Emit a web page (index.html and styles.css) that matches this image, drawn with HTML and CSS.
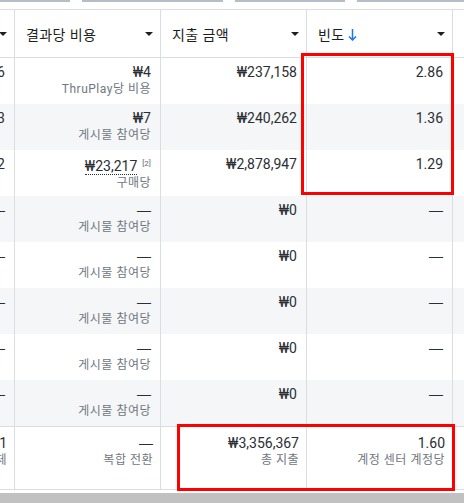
FILE: index.html
```html
<!DOCTYPE html>
<html lang="ko">
<head>
    <meta charset="UTF-8">
    <meta name="viewport" content="width=device-width, initial-scale=1.0">
    <title>광고 보고서</title>
    <link rel="stylesheet" href="styles.css">
</head>
<body>
    <div class="page">
        <div class="tabs">
            <span class="tab tab-a"></span>
            <span class="tab tab-b"></span>
            <span class="tab tab-c"></span>
            <span class="tab tab-d"></span>
        </div>

        <div class="report">
            <div class="row head">
                <div class="cell"><span class="caret"></span></div>
                <div class="cell"><span class="title">결과당 비용</span><span class="caret"></span></div>
                <div class="cell"><span class="title">지출 금액</span><span class="caret"></span></div>
                <div class="cell">
                    <span class="title">빈도
                        <svg class="sort" width="9" height="13" viewBox="0 0 9 13"><path d="M4.5 1v11M1 8.5l3.5 3.5 3.5-3.5" fill="none" stroke="#1877f2" stroke-width="1.5"/></svg>
                    </span>
                    <span class="caret"></span>
                </div>
                <div class="cell"></div>
            </div>

            <div class="row">
                <div class="cell"><span class="value">56</span></div>
                <div class="cell"><span class="value">₩4</span><span class="sub">ThruPlay당 비용</span></div>
                <div class="cell"><span class="value">₩237,158</span></div>
                <div class="cell"><span class="value">2.86</span></div>
                <div class="cell"></div>
            </div>
            <div class="row">
                <div class="cell"><span class="value">33</span></div>
                <div class="cell"><span class="value">₩7</span><span class="sub">게시물 참여당</span></div>
                <div class="cell"><span class="value">₩240,262</span></div>
                <div class="cell"><span class="value">1.36</span></div>
                <div class="cell"></div>
            </div>
            <div class="row">
                <div class="cell"><span class="value">12</span></div>
                <div class="cell"><span class="value"><span class="dotted">₩23,217</span><sup class="note">[2]</sup></span><span class="sub">구매당</span></div>
                <div class="cell"><span class="value">₩2,878,947</span></div>
                <div class="cell"><span class="value">1.29</span></div>
                <div class="cell"></div>
            </div>
            <div class="row">
                <div class="cell"><span class="value dash">—</span></div>
                <div class="cell"><span class="value dash">—</span><span class="sub">게시물 참여당</span></div>
                <div class="cell"><span class="value">₩0</span></div>
                <div class="cell"><span class="value dash">—</span></div>
                <div class="cell"></div>
            </div>
            <div class="row">
                <div class="cell"><span class="value dash">—</span></div>
                <div class="cell"><span class="value dash">—</span><span class="sub">게시물 참여당</span></div>
                <div class="cell"><span class="value">₩0</span></div>
                <div class="cell"><span class="value dash">—</span></div>
                <div class="cell"></div>
            </div>
            <div class="row">
                <div class="cell"><span class="value dash">—</span></div>
                <div class="cell"><span class="value dash">—</span><span class="sub">게시물 참여당</span></div>
                <div class="cell"><span class="value">₩0</span></div>
                <div class="cell"><span class="value dash">—</span></div>
                <div class="cell"></div>
            </div>
            <div class="row">
                <div class="cell"><span class="value dash">—</span></div>
                <div class="cell"><span class="value dash">—</span><span class="sub">게시물 참여당</span></div>
                <div class="cell"><span class="value">₩0</span></div>
                <div class="cell"><span class="value dash">—</span></div>
                <div class="cell"></div>
            </div>
            <div class="row">
                <div class="cell"><span class="value dash">—</span></div>
                <div class="cell"><span class="value dash">—</span><span class="sub">게시물 참여당</span></div>
                <div class="cell"><span class="value">₩0</span></div>
                <div class="cell"><span class="value dash">—</span></div>
                <div class="cell"></div>
            </div>

            <div class="row total">
                <div class="cell"><span class="value">1</span><span class="sub">전체</span></div>
                <div class="cell"><span class="value dash">—</span><span class="sub">복합 전환</span></div>
                <div class="cell"><span class="value">₩3,356,367</span><span class="sub">총 지출</span></div>
                <div class="cell"><span class="value">1.60</span><span class="sub">계정 센터 계정당</span></div>
                <div class="cell"></div>
            </div>
        </div>

        <div class="scrollbar"></div>

        <!-- highlight boxes drawn over the table -->
        <div class="mark mark-freq"></div>
        <div class="mark mark-total"></div>
    </div>
</body>
</html>
```

FILE: styles.css
```css
* {
    margin: 0;
    padding: 0;
    box-sizing: border-box;
}

body {
    background: #fff;
    color: #1c1e21;
    font-family: Roboto, "Noto Sans CJK KR", sans-serif;
    overflow: hidden;
}

.page {
    position: relative;
    width: 464px;
    height: 503px;
}

.tabs {
    display: flex;
    gap: 12px;
    height: 9px;
}

.tab {
    height: 2px;
    background: #b3bec9;
}

.tab-a { width: 70px; }
.tab-b { width: 141px; }
.tab-c { width: 110px; }
.tab-d { flex: 1; }

.report {
    border-top: 1px solid #dadde1;
}

.row {
    display: grid;
    grid-template-columns: 15px 146px 146px 146px 1fr;
    height: 46px;
}

.row:nth-child(odd) {
    background: #f5f6f7;
}

.cell {
    display: flex;
    flex-direction: column;
    align-items: flex-end;
    padding: 6px 9px 0 0;
    border-right: 1px solid #dadde1;
    overflow: hidden;
    white-space: nowrap;
}

.cell:last-child {
    border-right: none;
}

.value {
    font-size: 14px;
    line-height: 16px;
    color: #2b2e33;
}

.dash {
    font-family: "Liberation Sans", sans-serif;
}

.sub {
    font-size: 12px;
    line-height: 18px;
    letter-spacing: 0.5px;
    color: #707780;
}

.dotted {
    border-bottom: 1px dotted #2b2e33;
}

.note {
    font-size: 8px;
    color: #606770;
    vertical-align: 5px;
    margin-left: 5px;
}

/* header row */
.row.head {
    height: 48px;
    background: #fff;
    border-bottom: 1px solid #dadde1;
}

.head .cell {
    flex-direction: row;
    align-items: center;
    justify-content: space-between;
    padding: 0 7px 0 11px;
}

.head .cell:first-child {
    justify-content: flex-end;
    padding: 0 7px 0 0;
}

.title {
    display: flex;
    align-items: center;
    gap: 3px;
    font-size: 14px;
    letter-spacing: 0.4px;
}

.sort {
    margin-top: 1px;
}

.caret {
    width: 0;
    height: 0;
    border-left: 4px solid transparent;
    border-right: 4px solid transparent;
    border-top: 4px solid #1c1e21;
    flex-shrink: 0;
}

/* totals row */
.row.total {
    height: 64px;
    background: #fff;
    border-top: 1px solid #dadde1;
    border-bottom: 1px solid #dadde1;
}

.total .cell {
    padding: 8px 7px 0 0;
}

.scrollbar {
    margin-top: 3px;
    height: 11px;
    background: #c1c1c1;
}

/* red annotation boxes */
.mark {
    position: absolute;
    border: 3px solid #ff0000;
}

.mark-freq {
    left: 301px;
    top: 53px;
    width: 153px;
    height: 142px;
}

.mark-total {
    left: 177px;
    top: 424px;
    width: 278px;
    height: 67px;
}
```
